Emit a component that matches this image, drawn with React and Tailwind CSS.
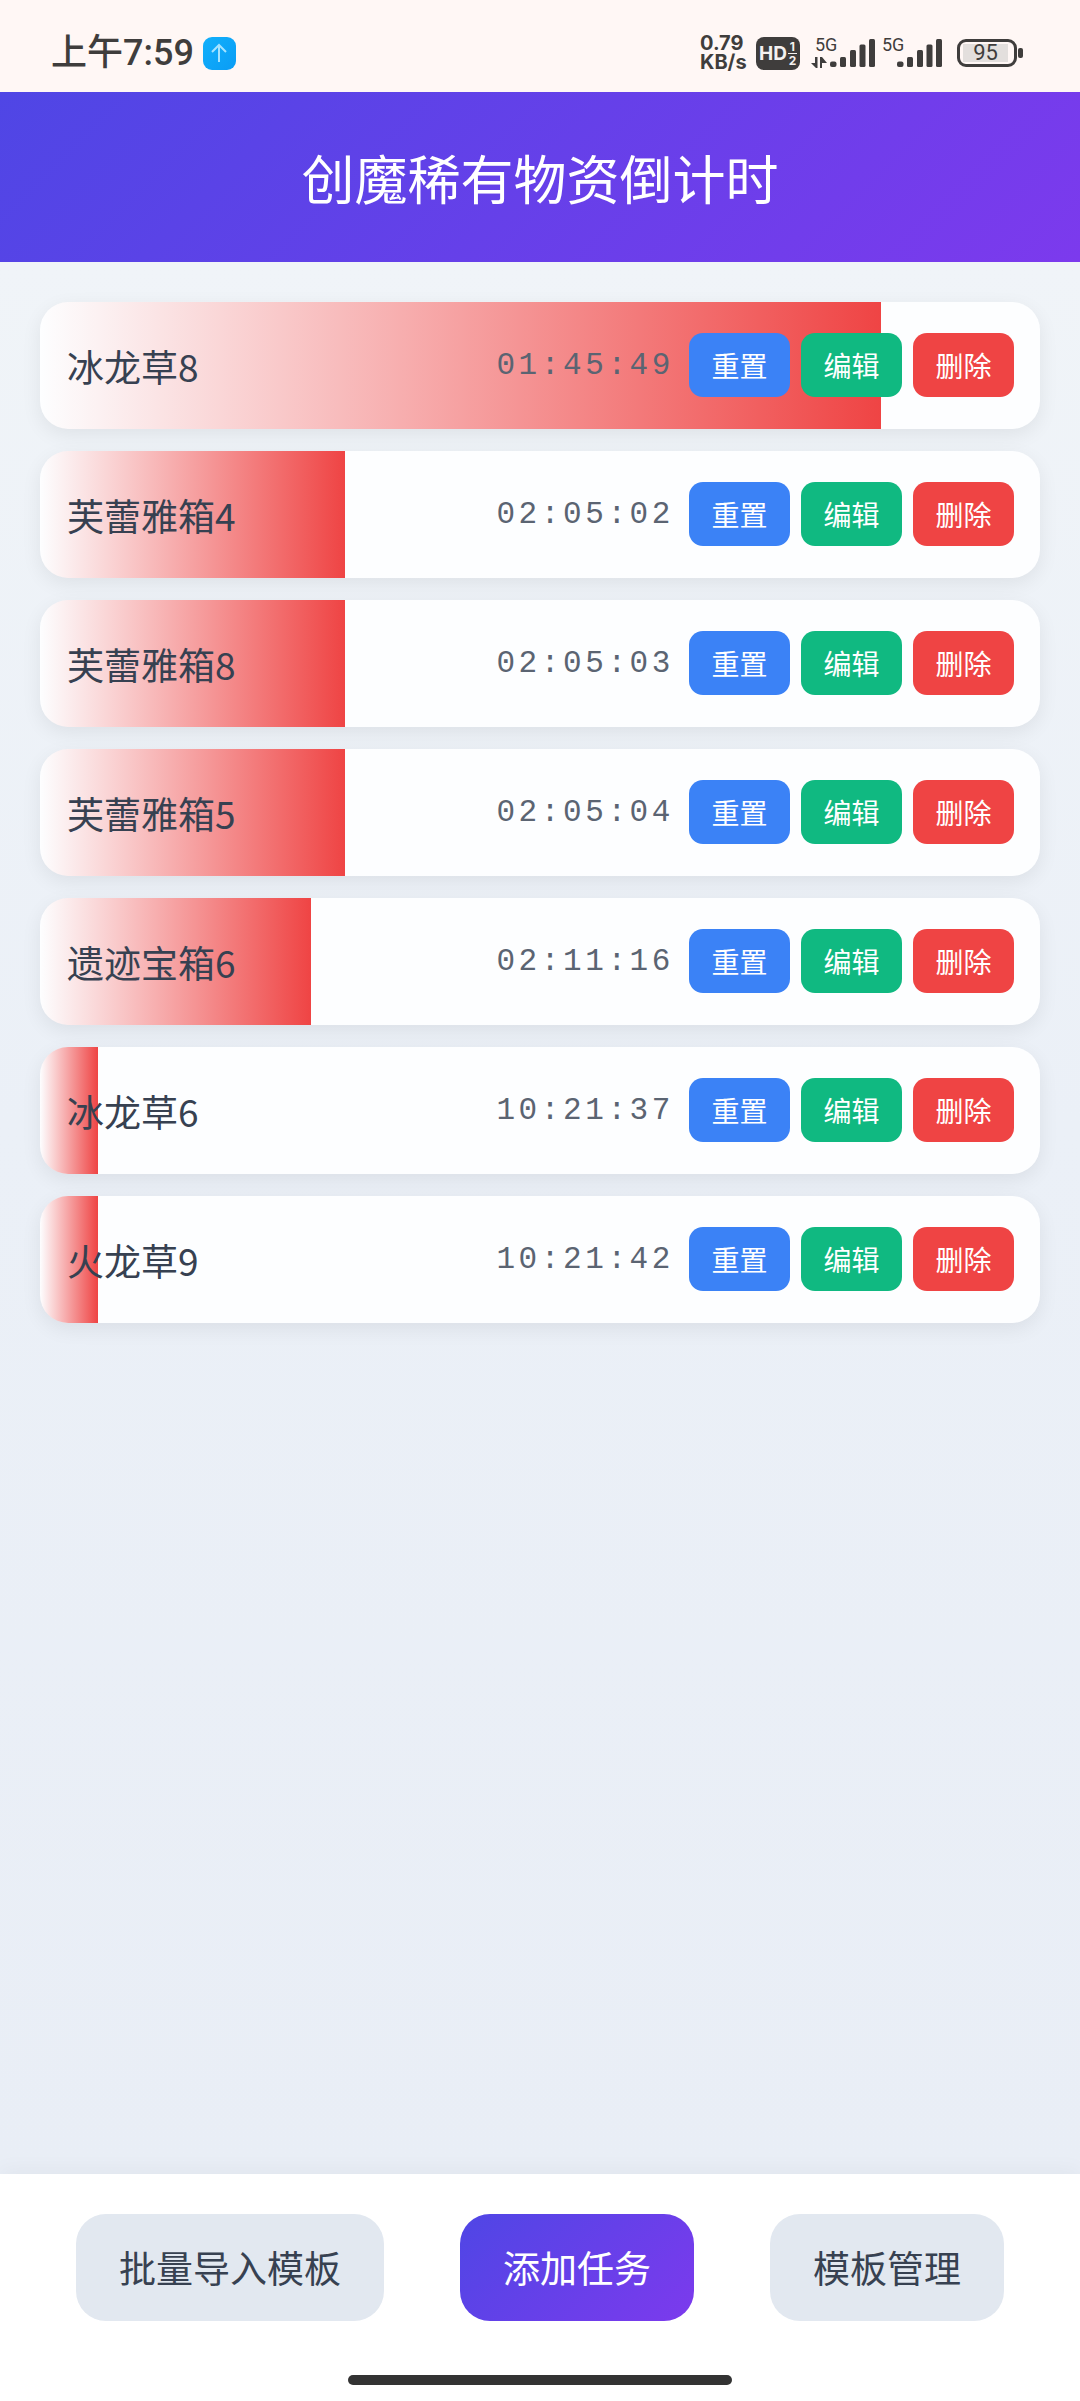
import React from 'react';

const tasks = [
    { name: '冰龙草8', time: '01:45:49', bar: 841 },
    { name: '芙蕾雅箱4', time: '02:05:02', bar: 305 },
    { name: '芙蕾雅箱8', time: '02:05:03', bar: 305 },
    { name: '芙蕾雅箱5', time: '02:05:04', bar: 305 },
    { name: '遗迹宝箱6', time: '02:11:16', bar: 271 },
    { name: '冰龙草6', time: '10:21:37', bar: 58 },
    { name: '火龙草9', time: '10:21:42', bar: 58 },
];

const InkBars = ({ x }) => (
    <g fill="#3f3d3c">
        <rect x={x} y="25.5" width="6.5" height="5.5" rx="2" />
        <rect x={x + 10} y="21" width="6" height="10" rx="1.5" />
        <rect x={x + 20} y="14" width="6" height="17" rx="1.5" />
        <rect x={x + 29.5} y="8.5" width="6" height="22.5" rx="1.5" />
        <rect x={x + 39} y="3" width="6" height="28" rx="1.5" />
    </g>
);

const Signal = ({ first }) => (
    <svg width={first ? 64 : 62} height="46" viewBox={`0 -6 ${first ? 64 : 62} 46`} className="block">
        <text x={first ? 4 : 0} y="15" fontSize="18" fill="#3f3d3c" fontFamily="Roboto, sans-serif">5G</text>
        {first && <path d="M6.5 21V32H5L0 27H4V21zM9 21V32H11V27H16L11 21z" fill="#3f3d3c" />}
        <InkBars x={first ? 19 : 15} />
    </svg>
);

function StatusBar() {
    return (
        <div className="h-[92px] bg-[#fff7f5] flex items-center justify-between pl-[51px] pr-[57px] pt-[14px] text-[#3f3d3c]">
            <div className="flex items-center gap-[9px]">
                <span className="text-[36px] leading-none font-medium font-['Roboto','Noto_Sans_CJK_SC',sans-serif]">上午7:59</span>
                <span className="w-[33px] h-[33px] rounded-[9px] bg-[linear-gradient(135deg,#12b0fb,#0a9cf5)] flex items-center justify-center">
                    <svg width="18" height="20" viewBox="0 0 18 20" fill="none" stroke="#a5e3ff" strokeWidth="2"><path d="M9 19V2M2 9l7-7 7 7" /></svg>
                </span>
            </div>
            <div className="flex items-center">
                <div className="w-[47px] text-[20px] leading-[19px] font-bold font-['Inter',sans-serif] whitespace-nowrap">
                    <div>0.79</div>
                    <div>KB/s</div>
                </div>
                <div className="ml-[9px] w-[44px] h-[33px] bg-[#3f3d3c] rounded-[8px] flex items-center justify-center gap-[1px] text-[#f5f1ef] font-bold font-['Inter',sans-serif]">
                    <span className="text-[19px] leading-none">HD</span>
                    <div className="flex flex-col items-center text-[12px] leading-[13px]">
                        <span>1</span>
                        <span className="w-[9px] h-[1px] bg-[#f5f1ef]"></span>
                        <span>2</span>
                    </div>
                </div>
                <div className="ml-[11px]"><Signal first /></div>
                <div className="ml-[7px]"><Signal /></div>
                <div className="ml-[13px] flex items-center">
                    <div className="w-[60px] h-[28px] border-[3px] border-[#3f3d3c] rounded-[9px] px-[3px] py-[2px]">
                        <div className="w-[45px] h-full bg-[#e3dfdd] flex items-center justify-center text-[22px] leading-none font-['Roboto',sans-serif]">95</div>
                    </div>
                    <div className="ml-[1px] w-[5px] h-[10px] bg-[#3f3d3c] rounded-[2px]"></div>
                </div>
            </div>
        </div>
    );
}

function TaskRow({ name, time, bar }) {
    return (
        <div className="relative h-[127px] rounded-[28px] bg-[#fdfeff] overflow-hidden flex items-center pl-[27px] pr-[26px] shadow-[0_6px_20px_rgba(0,0,0,0.07)]">
            <div
                className="absolute left-0 top-0 bottom-0 bg-[linear-gradient(90deg,rgba(239,68,68,0),#ef4444)]"
                style={{ width: bar }}
            ></div>
            <span className="relative flex-1 text-[37px] leading-none text-[#374151] mt-[2px]">{name}</span>
            <span className="relative text-[31px] leading-none tracking-[3.6px] text-[#5b6472] font-['Liberation_Mono',monospace] mr-[15px]">{time}</span>
            <div className="relative flex gap-[11px] -mt-[2px] text-white text-[28px]">
                <button className="w-[101px] h-[64px] rounded-[14px] bg-[#3b82f6]">重置</button>
                <button className="w-[101px] h-[64px] rounded-[14px] bg-[#10b981]">编辑</button>
                <button className="w-[101px] h-[64px] rounded-[14px] bg-[#ef4444]">删除</button>
            </div>
        </div>
    );
}

export default function App() {
    return (
        <div className="w-[1080px] h-[2401px] flex flex-col overflow-hidden font-['Noto_Sans_CJK_SC',sans-serif]">
            <StatusBar />
            <div className="h-[170px] bg-[linear-gradient(135deg,#4f46e5,#7c3aed)] flex items-center justify-center text-white text-[53px] leading-none">
                创魔稀有物资倒计时
            </div>
            <div className="flex-1 bg-[linear-gradient(180deg,#f0f4f8_0%,#ebf0f7_45%,#e9eef6_100%)] px-[40px] pt-[40px] flex flex-col gap-[22px]">
                {tasks.map((t) => (
                    <TaskRow key={t.name} {...t} />
                ))}
            </div>
            <div className="h-[227px] bg-white shadow-[0_-4px_20px_rgba(0,0,0,0.04)] relative">
                <div className="pt-[40px] flex justify-evenly text-[37px] leading-none">
                    <button className="w-[308px] h-[107px] rounded-[30px] bg-[#e2e8f0] text-[#374151]">批量导入模板</button>
                    <button className="w-[234px] h-[107px] rounded-[30px] bg-[linear-gradient(135deg,#4f46e5,#7c3aed)] text-white">添加任务</button>
                    <button className="w-[234px] h-[107px] rounded-[30px] bg-[#e2e8f0] text-[#374151]">模板管理</button>
                </div>
                <div className="mt-[54px] mx-auto w-[384px] h-[10px] rounded-full bg-[#333333]"></div>
            </div>
        </div>
    );
}
